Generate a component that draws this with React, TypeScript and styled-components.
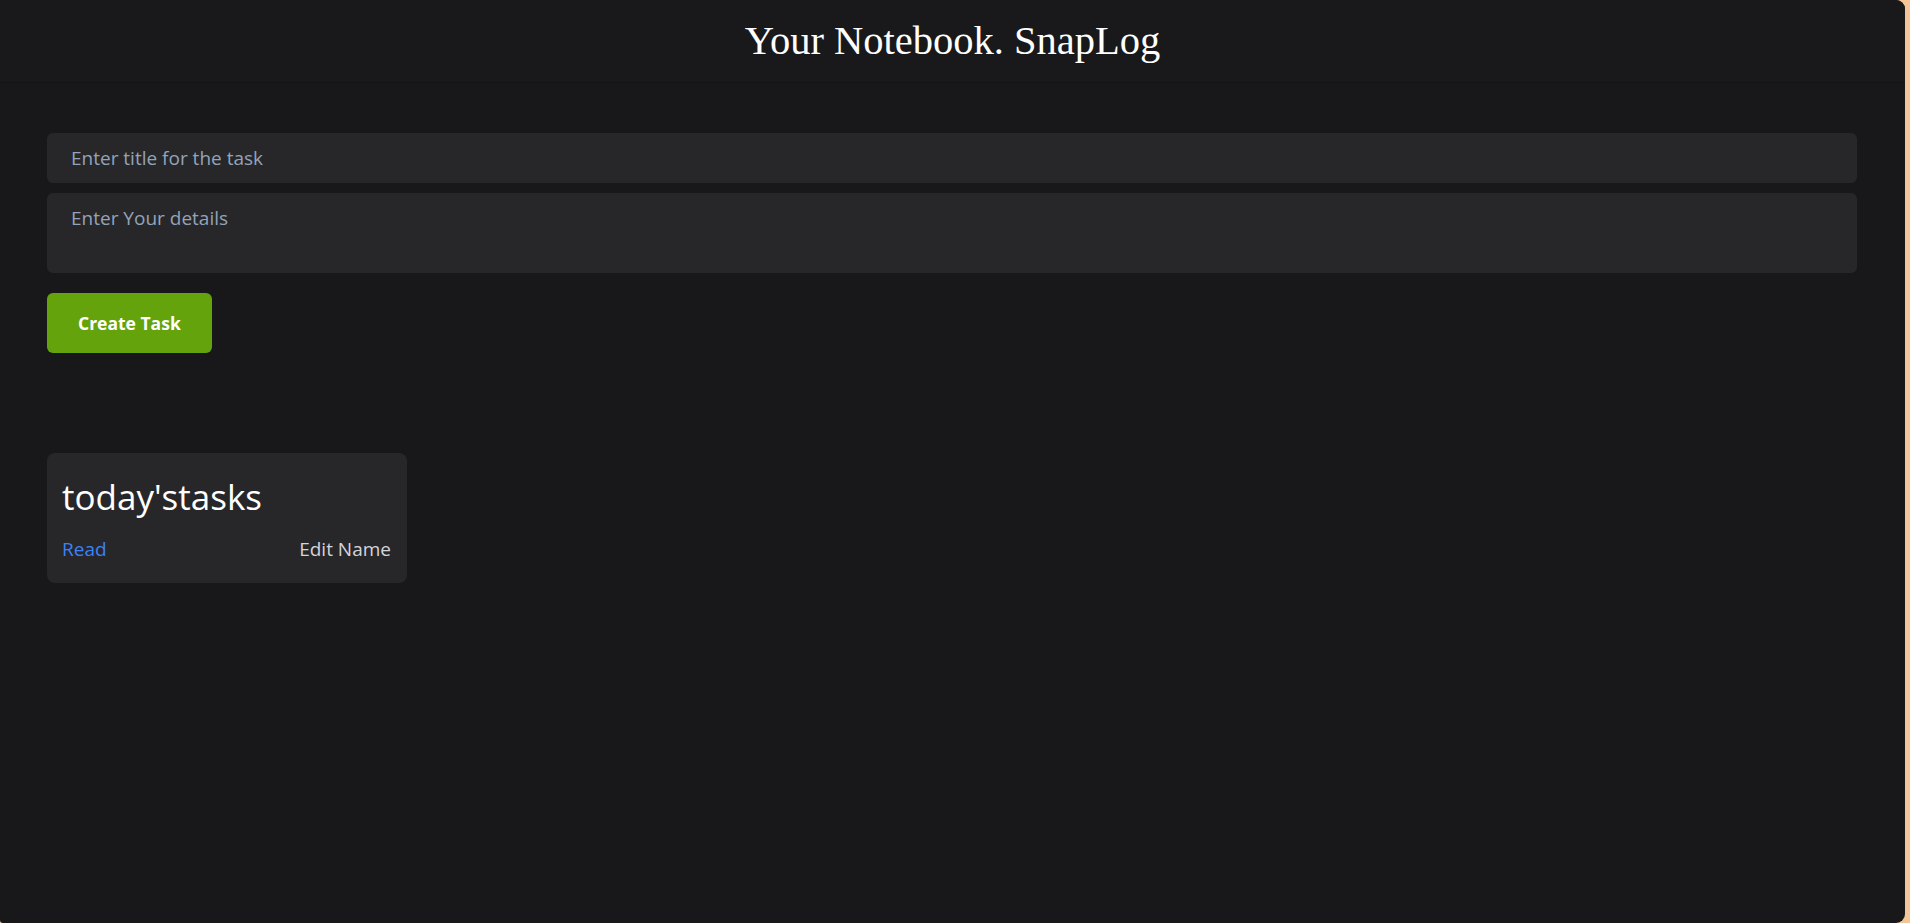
import React, { useState } from 'react';
import styled, { createGlobalStyle } from 'styled-components';

// --- global page reset: the app sits in a window frame with a warm edge on the right ---
const GlobalStyle = createGlobalStyle`
  html, body {
    margin: 0;
    padding: 0;
    height: 100%;
    background: #f3c597;
  }
  #root {
    height: 100%;
  }
  * {
    box-sizing: border-box;
  }
`;

const Shell = styled.div`
  width: calc(100% - 5px);
  height: 100vh;
  background: #18181b;
  border-radius: 0 9px 9px 3px;
  overflow: hidden;
  display: flex;
  flex-direction: column;
  font-family: 'Open Sans', 'Noto Sans', sans-serif;
`;

// --- top bar with the notebook name ---
const Header = styled.header`
  height: 83px;
  flex-shrink: 0;
  display: flex;
  align-items: center;
  justify-content: center;
  background: #19191c;
  border-bottom: 1px solid #141416;
`;

const Title = styled.h1`
  margin: 0;
  font-family: 'Liberation Serif', 'Times New Roman', serif;
  font-weight: 400;
  font-size: 40.5px;
  line-height: 1;
  color: #ffffff;
`;

const Main = styled.main`
  padding: 50px 48px 0 47px;
  display: flex;
  flex-direction: column;
`;

// --- the create form ---
const Form = styled.form`
  display: flex;
  flex-direction: column;
  align-items: flex-start;
  gap: 10px;
`;

const fieldStyles = `
  width: 100%;
  border: none;
  outline: none;
  border-radius: 6px;
  background: #27272a;
  color: #e4e4e7;
  font-family: 'Open Sans', 'Noto Sans', sans-serif;
  font-size: 19px;
  padding: 0 24px;
  &::placeholder {
    color: #94a3b8;
    opacity: 1;
  }
`;

const TitleInput = styled.input`
  ${fieldStyles}
  height: 50px;
`;

const DetailsInput = styled.textarea`
  ${fieldStyles}
  height: 80px;
  padding-top: 12px;
  line-height: 26px;
  resize: none;
`;

const CreateButton = styled.button`
  margin-top: 10px;
  height: 60px;
  padding: 0 31px;
  border: none;
  border-radius: 6px;
  background: #65a30d;
  color: #ffffff;
  font-family: 'Open Sans', 'Noto Sans', sans-serif;
  font-weight: 700;
  font-size: 17.5px;
  cursor: pointer;
`;

// --- saved notes ---
const NoteGrid = styled.section`
  margin-top: 100px;
  display: grid;
  grid-template-columns: repeat(auto-fill, 360px);
  gap: 20px;
`;

const NoteCard = styled.article`
  height: 130px;
  padding: 20px 16px 21px 15px;
  border-radius: 8px;
  background: #27272a;
  display: flex;
  flex-direction: column;
`;

const NoteTitle = styled.h2`
  margin: 0 0 15px;
  font-weight: 400;
  font-size: 35px;
  line-height: 48px;
  color: #ffffff;
`;

const NoteActions = styled.div`
  display: flex;
  justify-content: space-between;
  align-items: center;
  line-height: 26px;
  font-size: 19px;
`;

const ActionLink = styled.a<{ $tone: 'link' | 'muted' }>`
  color: ${p => (p.$tone === 'link' ? '#3b82f6' : '#d4d4d8')};
  text-decoration: none;
  cursor: pointer;
`;

interface Note {
  id: number;
  title: string;
  details: string;
}

const App = () => {
  const [title, setTitle] = useState('');
  const [details, setDetails] = useState('');
  const [notes, setNotes] = useState<Note[]>([
    { id: 1, title: "today'stasks", details: '' },
  ]);

  const handleCreate = (e: React.FormEvent) => {
    e.preventDefault();
    if (!title.trim()) return;
    setNotes(prev => [...prev, { id: Date.now(), title, details }]);
    setTitle('');
    setDetails('');
  };

  return (
    <>
      <GlobalStyle />
      <Shell>
        <Header>
          <Title>Your Notebook. SnapLog</Title>
        </Header>
        <Main>
          <Form onSubmit={handleCreate}>
            <TitleInput
              placeholder="Enter title for the task"
              value={title}
              onChange={e => setTitle(e.target.value)}
            />
            <DetailsInput
              placeholder="Enter Your details"
              value={details}
              onChange={e => setDetails(e.target.value)}
            />
            <CreateButton type="submit">Create Task</CreateButton>
          </Form>

          <NoteGrid>
            {notes.map(note => (
              <NoteCard key={note.id}>
                <NoteTitle>{note.title}</NoteTitle>
                <NoteActions>
                  <ActionLink $tone="link">Read</ActionLink>
                  <ActionLink $tone="muted">Edit Name</ActionLink>
                </NoteActions>
              </NoteCard>
            ))}
          </NoteGrid>
        </Main>
      </Shell>
    </>
  );
};

export default App;
